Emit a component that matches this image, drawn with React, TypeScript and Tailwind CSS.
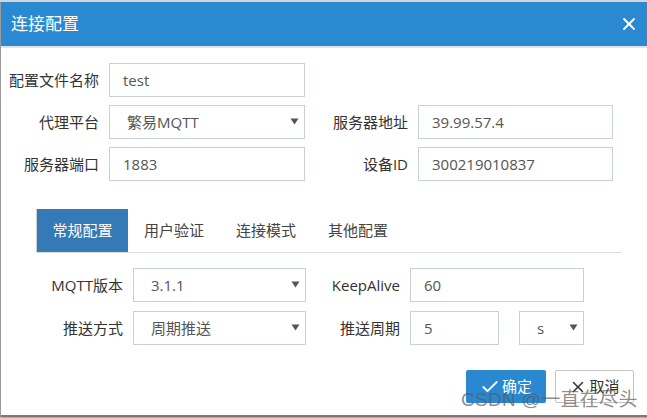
import { Check, X } from "lucide-react";

const FONT = "font-['Open_Sans','Noto_Sans_CJK_SC',sans-serif]";

function Field({ value, width }: { value: string; width: string }) {
  return (
    <div
      className={`${width} flex h-[34px] items-center border border-[#c7d1dc] bg-white pl-[13px] text-[15px] text-[#555]`}
    >
      {value}
    </div>
  );
}

function Select({ value, width }: { value: string; width: string }) {
  return (
    <div
      className={`${width} flex h-[34px] items-center justify-between border border-[#c7d1dc] bg-white pl-[17px] pr-[5px] text-[15px] text-[#555]`}
    >
      <span>{value}</span>
      <svg width="9" height="7" viewBox="0 0 9 7" className="mb-[2px]">
        <path d="M0.5 0.5 L8.5 0.5 L4.5 6.5 Z" fill="#555" />
      </svg>
    </div>
  );
}

function Label({ text, width }: { text: string; width: string }) {
  return (
    <div className={`${width} shrink-0 pr-[10px] text-right text-[15px] text-[#333]`}>
      {text}
    </div>
  );
}

const TABS = ["常规配置", "用户验证", "连接模式", "其他配置"];

export default function App() {
  return (
    <div className={`relative flex h-[418px] w-[647px] flex-col bg-[#8a8a8a] ${FONT}`}>
      <div className="h-[2px] bg-[#d6d6d6]" />
      <div className="flex flex-1 flex-col border-l border-[#9a9a9a] bg-white">
        <div className="flex h-[44px] items-center justify-between bg-[#2b89d2] pl-[10px] pr-[8px]">
          <span className="text-[17px] text-white">连接配置</span>
          <X size={20} strokeWidth={2.2} className="text-white" />
        </div>
        <div className="h-[2px] bg-[#e3e3e3]" />

        <div className="flex flex-col gap-[8px] pt-[15px]">
          <div className="flex items-center">
            <Label text="配置文件名称" width="w-[108px]" />
            <Field value="test" width="w-[196px]" />
          </div>
          <div className="flex items-center">
            <Label text="代理平台" width="w-[108px]" />
            <Select value="繁易MQTT" width="w-[196px]" />
            <Label text="服务器地址" width="w-[113px]" />
            <Field value="39.99.57.4" width="w-[195px]" />
          </div>
          <div className="flex items-center">
            <Label text="服务器端口" width="w-[108px]" />
            <Field value="1883" width="w-[196px]" />
            <Label text="设备ID" width="w-[113px]" />
            <Field value="300219010837" width="w-[195px]" />
          </div>
        </div>

        <div className="ml-[35px] mr-[26px] mt-[28px] flex border-b border-[#dddddd]">
          {TABS.map((t, i) => (
            <div
              key={t}
              className={`flex h-[43px] w-[92px] items-center justify-center text-[15px] ${
                i === 0
                  ? "border-l border-[#cccccc] bg-[#337ab7] text-white"
                  : "text-[#444]"
              }`}
            >
              {t}
            </div>
          ))}
        </div>

        <div className="mt-[15px] flex flex-col gap-[9px]">
          <div className="flex items-center">
            <Label text="MQTT版本" width="w-[132px]" />
            <Select value="3.1.1" width="w-[173px]" />
            <Label text="KeepAlive" width="w-[104px]" />
            <Field value="60" width="w-[174px]" />
          </div>
          <div className="flex items-center">
            <Label text="推送方式" width="w-[132px]" />
            <Select value="周期推送" width="w-[173px]" />
            <Label text="推送周期" width="w-[104px]" />
            <Field value="5" width="w-[89px]" />
            <div className="ml-[20px]">
              <Select value="s" width="w-[65px]" />
            </div>
          </div>
        </div>

        <div className="mr-[13px] mt-[25px] flex justify-end gap-[9px]">
          <div className="flex h-[33px] w-[80px] items-center justify-center gap-[2px] rounded-[2px] bg-[#2a88d1] text-[15px] text-white">
            <Check size={20} strokeWidth={2.2} />
            <span>确定</span>
          </div>
          <div className="flex h-[33px] w-[79px] items-center justify-center gap-[2px] rounded-[2px] border border-[#c4c4c4] bg-white text-[15px] text-[#333]">
            <X size={18} strokeWidth={2} />
            <span>取消</span>
          </div>
        </div>
        <div className="flex-1" />
        <div className="h-[2px] bg-[#7a7a7a]" />
      </div>
      <div className="h-[1px] bg-[#b0b0b0]" />

      <div className="absolute left-[461px] top-[386px] text-[19px] tracking-[0.3px] text-[rgba(90,90,90,0.7)] font-['Liberation_Sans','Noto_Sans_CJK_SC',sans-serif]">
        CSDN @一直在尽头
      </div>
    </div>
  );
}
